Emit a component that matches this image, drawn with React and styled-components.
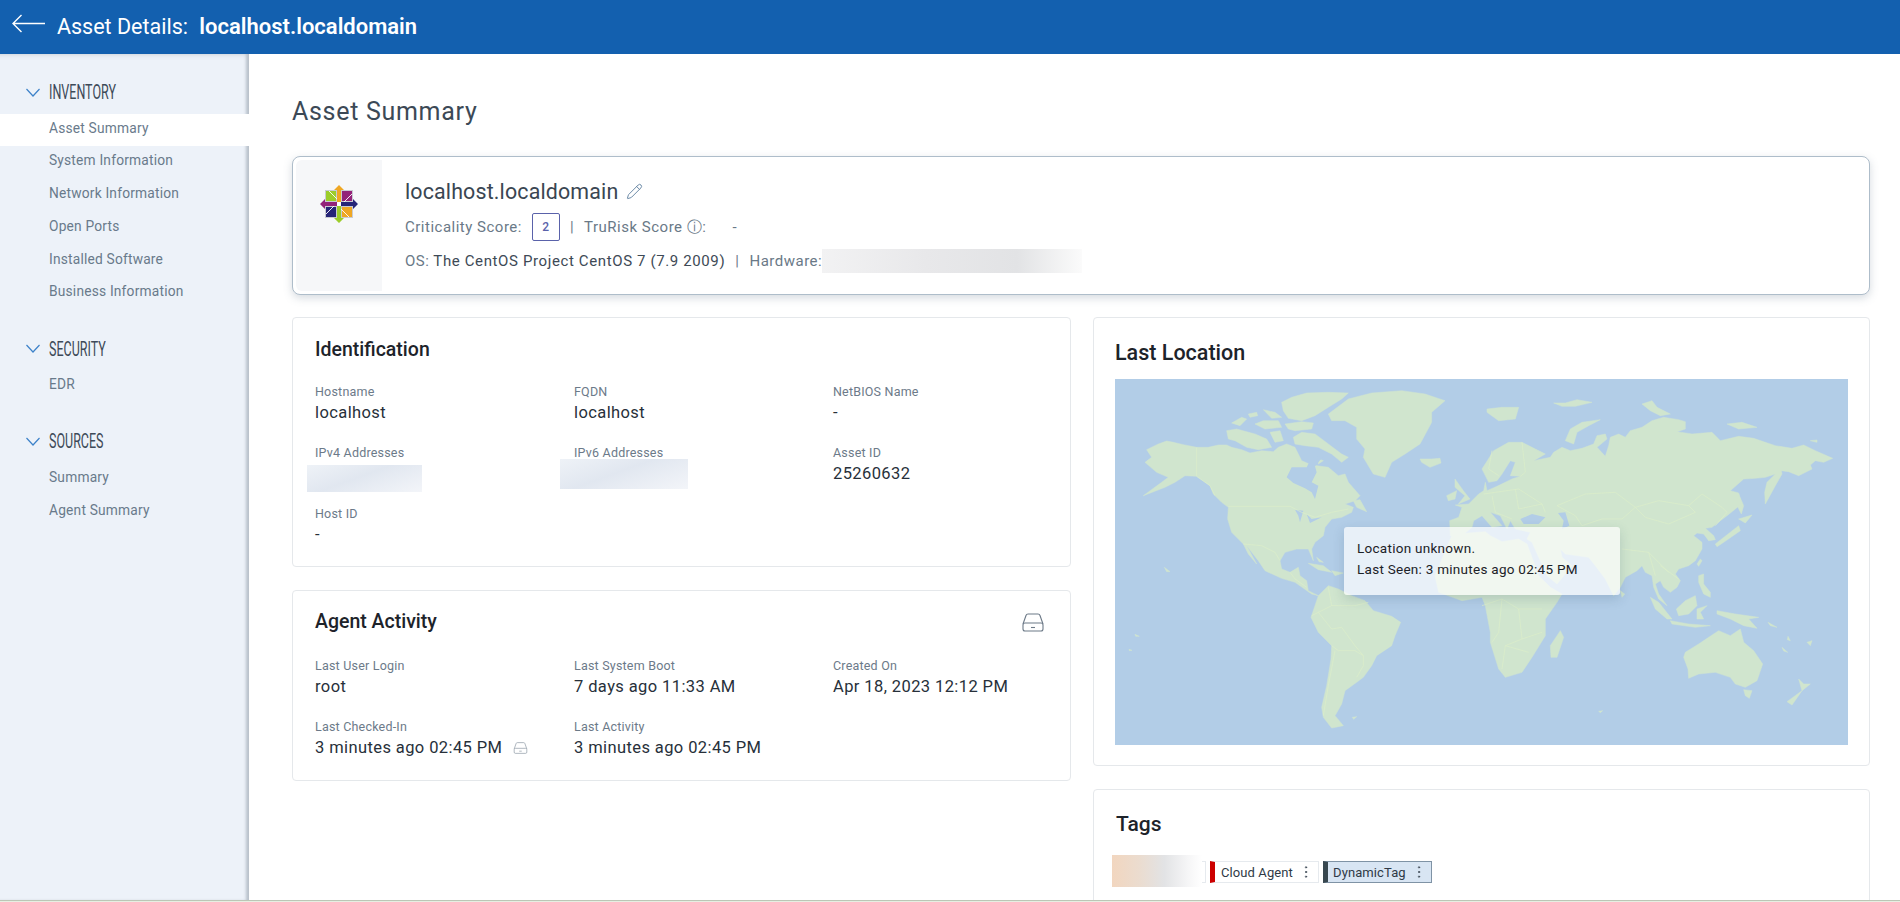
import React from 'react';
import styled, { createGlobalStyle } from 'styled-components';
import { Pencil, EllipsisVertical } from 'lucide-react';

const GlobalStyle = createGlobalStyle`
  html, body { margin: 0; padding: 0; height: 100%; background: #fff; }
  body { font-family: Roboto, "Liberation Sans", sans-serif; overflow: hidden; }
  * { box-sizing: border-box; }
`;

const navSections = [
  { title: 'INVENTORY', items: ['Asset Summary', 'System Information', 'Network Information', 'Open Ports', 'Installed Software', 'Business Information'] },
  { title: 'SECURITY', items: ['EDR'] },
  { title: 'SOURCES', items: ['Summary', 'Agent Summary'] },
];

// traced from the map, in 3x pixels. west half as is, east half shifted by 1101
const westLand = [
  'M95 212L130 195 155 186 175 190 205 197 245 205 280 205 310 198 335 198 350 205 380 212 405 222 440 215 475 218 490 205 515 195 540 205 550 225 560 245 590 258 640 265 670 290 690 285 700 310 735 350 720 365 690 375 715 385 710 400 680 415 650 420 630 445 625 470 600 490 590 510 595 545 580 510 545 510 510 520 495 545 500 570 525 580 550 565 555 590 575 605 580 635 610 650 590 645 540 610 500 598 450 575 430 545 395 500 425 555 400 525 385 495 350 460 338 420 340 385 320 370 295 345 285 320 245 292 210 290 180 310 150 325 85 350 140 310 160 295 125 280 90 250 110 235Z',
  'M535 175L560 160 600 165 640 195 680 225 700 235 680 250 650 225 610 205 570 200 540 195Z',
  'M500 70L530 55 575 42 640 40 700 42 680 60 640 85 600 110 560 125 520 118 505 95Z',
  'M510 135L560 128 595 132 590 150 540 155 520 150Z',
  'M445 92L480 100 500 115 470 118Z',
  'M350 132L380 115 395 120 375 140Z',
  'M400 105L425 100 428 110 405 115Z',
  'M445 125L490 125 500 145 450 150 420 135Z',
  'M335 155L365 150 420 165 455 180 470 205 430 212 395 205 360 185 340 180Z',
  'M465 160L495 155 505 185 480 190Z',
  'M610 240L625 245 610 255Z',
  'M715 365L735 362 755 398 725 385Z',
  'M640 105L700 60 770 42 860 35 930 45 990 65 950 100 950 130 915 195 870 225 830 250 810 295 775 285 745 235 750 210 725 180 725 145 690 125 650 125Z',
  'M915 240L950 240 975 238 978 252 945 265 920 250Z',
  'M580 553L625 560 650 580 610 572Z',
  'M650 575L685 582 660 590Z',
  'M605 535L625 550 612 548Z',
  'M148 565L165 578 155 578Z',
  'M60 766L73 772 62 772Z',
  'M42 811L51 814 43 815Z',
  'M610 650L640 620 670 630 710 650 750 665 775 695 830 712 857 730 840 770 830 800 785 830 770 860 745 895 725 910 690 935 680 975 660 1010 685 1040 650 1047 625 1015 620 985 635 920 648 840 650 800 610 760 588 715 600 680Z',
  'M712 1015L725 1013 716 1021Z',
];

const westLakes = [
  'M515 295L530 265 575 265 590 235 625 232 600 262 605 280 590 310 610 320 600 360 590 340 570 328 535 312Z',
  'M540 392L565 395 555 430 550 410Z',
  'M575 405L590 420 620 415 585 432Z',
];

const eastLand = [
  'M-97 425L-70 415 -60 385 -80 378 -40 375 -10 345 5 335 10 310 15 335 45 322 90 300 115 292 85 290 100 250 85 245 60 285 45 305 20 310 5 280 0 270 35 215 80 190 120 190 190 225 155 245 205 235 215 220 240 205 265 215 300 208 335 195 345 170 370 165 375 180 345 205 370 232 380 200 385 175 410 165 430 175 445 155 480 145 510 125 545 115 590 122 610 128 610 150 585 158 630 165 690 160 715 185 770 172 815 178 850 190 880 200 930 208 965 198 1000 215 1052 238 1025 250 1000 245 985 258 990 270 950 290 920 278 898 275 900 285 880 320 850 375 848 340 855 310 880 285 850 295 820 298 785 300 745 335 770 342 778 375 760 390 735 410 715 425 690 445 670 448 695 470 700 482 680 485 665 465 645 462 635 470 660 490 660 510 640 545 620 560 590 570 580 585 595 605 585 625 565 640 545 625 535 605 520 615 530 645 555 680 530 660 515 625 510 590 490 580 480 560 465 575 430 595 415 625 395 650 370 600 340 560 320 535 250 525 235 510 240 535 270 560 225 615 195 590 150 490 135 480 145 460 100 450 85 425 75 450 55 410 25 400 60 440 30 445 0 410 -25 425 -30 445 -60 470 -95 470Z',
  'M-141 590L-90 468 -40 462 10 458 25 470 60 488 110 480 135 495 170 590 205 625 240 645 225 670 190 720 190 770 150 835 120 880 70 895 50 870 25 790 25 760 10 680 0 655 -60 665 -130 640Z',
  'M235 755L245 775 225 835 207 835 205 800Z',
  'M-81 300L-56 335 -36 360 -71 375 -51 350 -81 325Z',
  'M-106 350L-76 335 -81 360 -101 365Z',
  'M415 635L428 645 420 655Z',
  'M700 495L770 440 775 455 725 490 705 503Z',
  'M770 420L810 408 790 432Z',
  'M770 345L785 380 778 405 768 385Z',
  'M655 540L660 545 650 562 645 555Z',
  'M650 590L665 585 665 615 685 640 685 655 665 645 650 610Z',
  'M583 690L610 665 640 650 645 680 620 705 590 710Z',
  'M505 655L530 670 570 720 555 720 520 690Z',
  'M565 725L620 735 685 740 640 745 570 735Z',
  'M645 690L675 680 655 700 665 720 645 720Z',
  'M705 695L760 705 830 715 800 720 825 748 785 740 745 720 705 705Z',
  'M610 820L650 795 680 775 710 755 745 770 775 750 785 790 815 815 842 855 825 905 790 925 760 915 745 895 700 880 650 885 620 898 618 870 605 835Z',
  'M785 932L810 935 802 958 790 950Z',
  'M950 900L965 915 985 915 960 935Z',
  'M915 968L960 935 930 978Z',
  'M250 185L265 150 300 130 355 122 320 140 285 160 275 195Z',
  'M15 90L60 85 110 85 100 120 50 125 15 100Z',
  'M215 72L250 72 285 62 330 70 280 82 240 82Z',
  'M480 75L510 65 525 85 565 105 535 110 505 95Z',
  'M735 135L780 130 825 145 770 150Z',
  'M985 185L1005 183 1005 190Z',
  'M858 730L885 745 865 740Z',
  'M918 772L925 785 916 782Z',
  'M900 805L917 820 905 816Z',
  'M975 790L990 785 985 800Z',
  'M350 997L362 995 355 1001Z',
];

const eastLakes = [
  'M115 420L150 405 190 415 170 435 125 435Z',
  'M228 402L250 400 262 440 240 450 245 425Z',
];

const westBorders = [
  'M245 205V292',
  'M245 292L285 320 300 350',
  'M340 382H525L560 400 600 415 650 400 700 390',
  'M385 495L440 500 480 520 495 545',
  'M525 580L540 600 575 625',
  'M640 625L650 680 610 700 590 710M650 680L720 680 760 670',
  'M610 700L650 750 680 745 720 800 745 830 745 860 725 895',
  'M650 800L670 815 720 815 745 830M660 815L640 920 625 1010',
];

const eastBorders = [
  'M225 380L310 345 400 340 460 385 530 365 620 380 660 345 720 385 735 400 700 440',
  'M460 385L490 415 560 435 640 400 620 380',
  'M225 380L280 410 300 440 360 420 420 420 460 385',
  'M420 510L500 520 530 550 560 580M500 520L520 590M535 560L590 600',
  'M30 215L20 270 50 290M120 190L130 280 115 292',
  'M5 345L40 340 110 330 180 375 190 400M30 350L40 400 90 420M100 330L110 390 180 375',
  'M0 680L60 660 110 690 180 690M60 660L50 760 30 790M110 690L120 780 70 800 60 870M120 780L180 760M70 800L140 820',
];

const Page = styled.div`
  display: grid;
  grid-template-rows: 54px 1fr 2px;
  height: 100vh;
  overflow: hidden;
`;

const TopBar = styled.header`
  display: flex;
  align-items: center;
  background: #1360af;
  color: #fff;
  padding-left: 12px;
`;

const BackArrow = styled.svg`
  width: 33px;
  height: 20px;
  margin-right: 12px;
  margin-top: -6px;
`;

const TopTitle = styled.h1`
  margin: 0;
  font-size: 21.5px;
  line-height: 54px;
  font-weight: 400;
`;

const TopName = styled.span`
  font-size: 22px;
  font-weight: 600;
  margin-left: 6px;
`;

const Body = styled.div`
  display: grid;
  grid-template-columns: 249px 1fr;
  min-height: 0;
`;

const Side = styled.nav`
  background: #edf2f9;
  padding-top: 20px;
  box-shadow: inset -4px 0 3px -1px #b9c1cb, inset 0 6px 5px -5px #d5dbe2;
`;

const NavSection = styled.section`
  margin-bottom: 20.5px;
`;

const NavHead = styled.div`
  display: flex;
  align-items: center;
  height: 34px;
  margin-bottom: 5.5px;
  padding: 2px 0 0 26px;
`;

const NavChevron = styled.svg`
  width: 14px;
  height: 9px;
  margin-right: 9px;
`;

const NavTitle = styled.span`
  display: inline-block;
  font-size: 20px;
  font-weight: 400;
  color: #3d4a58;
  transform: scaleX(0.625);
  transform-origin: left center;
  white-space: nowrap;
`;

const NavItem = styled.div`
  height: 32.75px;
  line-height: 29px;
  padding-left: 49px;
  font-size: 13.75px;
  letter-spacing: 0.2px;
  color: #697a8b;
  background: ${(p) => (p.$active ? '#fff' : 'transparent')};
`;

const Main = styled.main`
  padding: 0 30px 0 43px;
  overflow: hidden;
  min-width: 0;
`;

const PageTitle = styled.h2`
  margin: 0;
  height: 102px;
  line-height: 115px;
  font-size: 25px;
  font-weight: 400;
  letter-spacing: 0.7px;
  color: #3c4956;
`;

const SummaryCard = styled.div`
  display: flex;
  height: 139px;
  padding: 3px;
  border: 1px solid #aebdca;
  border-radius: 8px;
  box-shadow: 0 3px 8px rgba(90, 110, 130, 0.25);
  background: #fff;
  margin-bottom: 22px;
`;

const LogoPanel = styled.div`
  width: 86px;
  background: #f6f7f9;
  padding: 25px 0 0 24px;
  border-radius: 6px 0 0 6px;
`;

const SummaryInfo = styled.div`
  padding: 13px 0 0 23px;
`;

const AssetName = styled.div`
  display: flex;
  align-items: center;
  gap: 8px;
  height: 37px;
  font-size: 21.4px;
  letter-spacing: 0.15px;
  color: #3a4652;
`;

const ScoreRow = styled.div`
  display: flex;
  align-items: center;
  height: 34px;
  font-size: 15px;
  letter-spacing: 0.5px;
  color: #6a7987;
`;

const ScoreBox = styled.span`
  display: inline-flex;
  align-items: center;
  justify-content: center;
  width: 28px;
  height: 28px;
  margin-left: 10px;
  border: 1px solid #5a62aa;
  border-radius: 2px;
  font-size: 12px;
  font-weight: 500;
  color: #5a62aa;
`;

const Sep = styled.span`
  margin: 0 10px;
`;

const Dash = styled.span`
  margin-left: 26px;
`;

const Dark = styled.span`
  color: #3e4a56;
  margin-left: 4px;
  letter-spacing: 0.62px;
`;

const HardwareBlur = styled.span`
  display: inline-block;
  width: 260px;
  height: 24px;
  background: linear-gradient(90deg, #f2f2f3 0%, #e8e8ea 40%, #e2e3e5 75%, #fbfbfb 100%);
`;

const Columns = styled.div`
  display: grid;
  grid-template-columns: 779px 777px;
  gap: 22px;
`;

const Stack = styled.div`
  display: flex;
  flex-direction: column;
  gap: 23px;
`;

const Card = styled.section`
  position: relative;
  height: ${(p) => p.$h}px;
  border: 1px solid #e5e8eb;
  border-radius: 4px;
  padding: ${(p) => p.$pad};
  background: #fff;
`;

const CardTitle = styled.h3`
  margin: 0 0 ${(p) => p.$gap}px;
  height: 30px;
  line-height: 30px;
  font-size: ${(p) => p.$size || 19.5}px;
  font-weight: 500;
  color: #1d232a;
`;

const FieldGrid = styled.div`
  display: grid;
  grid-template-columns: repeat(3, 259px);
  grid-auto-rows: 61px;
`;

const Field = styled.div`
  position: relative;
`;

const FieldLabel = styled.div`
  position: relative;
  z-index: 1;
  height: 19px;
  line-height: 17px;
  font-size: 12.5px;
  letter-spacing: 0.2px;
  color: #6c7a89;
`;

const FieldValue = styled.div`
  display: flex;
  align-items: center;
  gap: 11px;
  height: 22px;
  line-height: 22px;
  font-size: 16.5px;
  letter-spacing: 0.4px;
  color: #27303a;
`;

const FieldBlur = styled.div`
  position: absolute;
  left: ${(p) => p.$left}px;
  top: ${(p) => p.$top}px;
  width: ${(p) => p.$w}px;
  height: ${(p) => p.$h}px;
  background: linear-gradient(160deg, #eef2f7 0%, #e1e7f0 45%, #f3f5f9 100%);
`;

const DriveBig = styled.svg`
  position: absolute;
  top: 22px;
  right: 26px;
  width: 22px;
  height: 19px;
`;

const DriveSmall = styled.svg`
  width: 15px;
  height: 12px;
`;

const MapBox = styled.div`
  position: relative;
  height: 366px;
  width: 733px;
  background: #b2cde7;
`;

const MapSvg = styled.svg`
  display: block;
  width: 100%;
  height: 100%;
`;

const MapTip = styled.div`
  position: absolute;
  left: 229px;
  top: 148px;
  width: 276px;
  height: 68px;
  padding: 11px 13px;
  border-radius: 3px;
  background: rgba(255, 255, 255, 0.7);
  box-shadow: 0 4px 12px rgba(40, 70, 100, 0.18);
  font-size: 13.5px;
  line-height: 21px;
  letter-spacing: 0.27px;
  color: #1c2228;
`;

const TagRow = styled.div`
  position: relative;
  display: flex;
  gap: 4px;
`;

const TagBlur = styled.div`
  position: absolute;
  left: -4px;
  top: -6px;
  width: 90px;
  height: 32px;
  background: linear-gradient(90deg, #f2d6bf 0%, #ebdccf 30%, #e2e3e5 58%, #f6f6f7 85%, #fff 100%);
`;

const Tag = styled.div`
  display: flex;
  align-items: center;
  justify-content: space-between;
  width: ${(p) => p.$w}px;
  height: 22px;
  padding: 0 4px 0 ${(p) => p.$padLeft || 6}px;
  font-size: 13px;
  letter-spacing: 0.1px;
  color: #2f3a46;
  background: ${(p) => p.$bg || '#fff'};
  border: 1px solid ${(p) => p.$line || '#e6eaee'};
  border-left: 5px solid ${(p) => p.$bar};
`;

const FootLine = styled.div`
  background: linear-gradient(#bcc6b6 50%, #e6efe2 50%);
`;

const Field2 = ({ label, children }) => (
  <Field>
    <FieldLabel>{label}</FieldLabel>
    <FieldValue>{children}</FieldValue>
  </Field>
);

const Drive = ({ as: Wrap, color }) => (
  <Wrap viewBox="0 0 22 19" fill="none" stroke={color} strokeWidth="1.1">
    <path d="M1 11L4 2.5Q4.5 1 6 1H16Q17.5 1 18 2.5L21 11" />
    <rect x="1" y="10" width="20" height="8" rx="2" />
    <path d="M9 14.5H13" />
  </Wrap>
);

const CentosLogo = () => (
  <svg width="38" height="38" viewBox="0 0 38 38">
    <path fill="#efa724" d="M19 0L24 5H21V17H17V5H14Z" />
    <path fill="#262577" d="M38 19L33 24V21H21V17H33V14Z" />
    <path fill="#9ccd2a" d="M19 38L14 33H17V21H21V33H24Z" />
    <path fill="#932279" d="M0 19L5 14V17H17V21H5V24Z" />
    <rect x="5.5" y="5.5" width="11" height="11" fill="#9ccd2a" stroke="#c9cbd2" />
    <rect x="21.5" y="5.5" width="11" height="11" fill="#932279" stroke="#c9cbd2" />
    <rect x="5.5" y="21.5" width="11" height="11" fill="#262577" stroke="#c9cbd2" />
    <rect x="21.5" y="21.5" width="11" height="11" fill="#efa724" stroke="#c9cbd2" />
    <path stroke="#fff" strokeWidth="0.9" fill="none" d="M9 6L17 14M32 9L24 17M6 29L14 21M29 32L21 24" />
    <circle cx="19" cy="19" r="2" fill="#fff" />
  </svg>
);

const Continents = ({ land, lakes, borders }) => (
  <>
    <path fill="#d0e5ce" stroke="#d0e5ce" strokeWidth="1.5" strokeLinejoin="round" d={land.join('')} />
    <path fill="#b2cde7" d={lakes.join('')} />
    <path fill="none" stroke="#dcefc9" strokeWidth="2" d={borders.join('')} />
  </>
);

const WorldMap = () => (
  <MapSvg viewBox="0 0 2199 1098" preserveAspectRatio="none">
    <Continents land={westLand} lakes={westLakes} borders={westBorders} />
    <g transform="translate(1101 0)">
      <Continents land={eastLand} lakes={eastLakes} borders={eastBorders} />
    </g>
  </MapSvg>
);

export default function App() {
  return (
    <Page>
      <GlobalStyle />
      <TopBar>
        <BackArrow viewBox="0 0 33 20" fill="none" stroke="#fff" strokeWidth="1.4">
          <path d="M33 9.5H1M9.5 1L1 9.5L9.5 18" />
        </BackArrow>
        <TopTitle>
          Asset Details: <TopName>localhost.localdomain</TopName>
        </TopTitle>
      </TopBar>
      <Body>
        <Side>
          {navSections.map((section) => (
            <NavSection key={section.title}>
              <NavHead>
                <NavChevron viewBox="0 0 14 9" fill="none" stroke="#3d82c9" strokeWidth="1.2">
                  <path d="M0.5 1L7 8L13.5 1" />
                </NavChevron>
                <NavTitle>{section.title}</NavTitle>
              </NavHead>
              {section.items.map((item) => (
                <NavItem key={item} $active={item === 'Asset Summary'}>{item}</NavItem>
              ))}
            </NavSection>
          ))}
        </Side>
        <Main>
          <PageTitle>Asset Summary</PageTitle>
          <SummaryCard>
            <LogoPanel><CentosLogo /></LogoPanel>
            <SummaryInfo>
              <AssetName>
                localhost.localdomain
                <Pencil size={17} strokeWidth={1.3} color="#5f7f9f" />
              </AssetName>
              <ScoreRow>
                Criticality Score:
                <ScoreBox>2</ScoreBox>
                <Sep>|</Sep>
                TruRisk Score ⓘ:
                <Dash>-</Dash>
              </ScoreRow>
              <ScoreRow>
                OS: <Dark>The CentOS Project CentOS 7 (7.9 2009)</Dark>
                <Sep>|</Sep>
                Hardware:
                <HardwareBlur />
              </ScoreRow>
            </SummaryInfo>
          </SummaryCard>
          <Columns>
            <Stack>
              <Card $h={250} $pad="17px 22px 0">
                <CardTitle $gap={18}>Identification</CardTitle>
                <FieldGrid>
                  <Field2 label="Hostname">localhost</Field2>
                  <Field2 label="FQDN">localhost</Field2>
                  <Field2 label="NetBIOS Name">-</Field2>
                  <Field>
                    <FieldLabel>IPv4 Addresses</FieldLabel>
                    <FieldBlur $left={-8} $top={21} $w={115} $h={27} />
                  </Field>
                  <Field>
                    <FieldLabel>IPv6 Addresses</FieldLabel>
                    <FieldBlur $left={-14} $top={15} $w={128} $h={30} />
                  </Field>
                  <Field2 label="Asset ID">25260632</Field2>
                  <Field2 label="Host ID">-</Field2>
                </FieldGrid>
              </Card>
              <Card $h={191} $pad="16px 22px 0">
                <CardTitle $gap={20}>Agent Activity</CardTitle>
                <Drive as={DriveBig} color="#6d7a88" />
                <FieldGrid>
                  <Field2 label="Last User Login">root</Field2>
                  <Field2 label="Last System Boot">7 days ago 11:33 AM</Field2>
                  <Field2 label="Created On">Apr 18, 2023 12:12 PM</Field2>
                  <Field2 label="Last Checked-In">
                    3 minutes ago 02:45 PM
                    <Drive as={DriveSmall} color="#8d98a3" />
                  </Field2>
                  <Field2 label="Last Activity">3 minutes ago 02:45 PM</Field2>
                </FieldGrid>
              </Card>
            </Stack>
            <Stack>
              <Card $h={449} $pad="20px 21px 0">
                <CardTitle $size={21.5} $gap={11}>Last Location</CardTitle>
                <MapBox>
                  <WorldMap />
                  <MapTip>
                    Location unknown.
                    <br />
                    Last Seen: 3 minutes ago 02:45 PM
                  </MapTip>
                </MapBox>
              </Card>
              <Card $h={140} $pad="19px 22px 0">
                <CardTitle $size={21} $gap={22}>Tags</CardTitle>
                <TagRow>
                  <TagBlur />
                  <Tag $w={90} $bar="#fff" />
                  <Tag $w={109} $bar="#cc0000">
                    Cloud Agent
                    <EllipsisVertical size={16} strokeWidth={1.5} color="#46525e" />
                  </Tag>
                  <Tag $w={109} $bar="#37474f" $bg="#d8e5f3" $line="#7f93a5" $padLeft={5}>
                    DynamicTag
                    <EllipsisVertical size={16} strokeWidth={1.5} color="#46525e" />
                  </Tag>
                </TagRow>
              </Card>
            </Stack>
          </Columns>
        </Main>
      </Body>
      <FootLine />
    </Page>
  );
}
